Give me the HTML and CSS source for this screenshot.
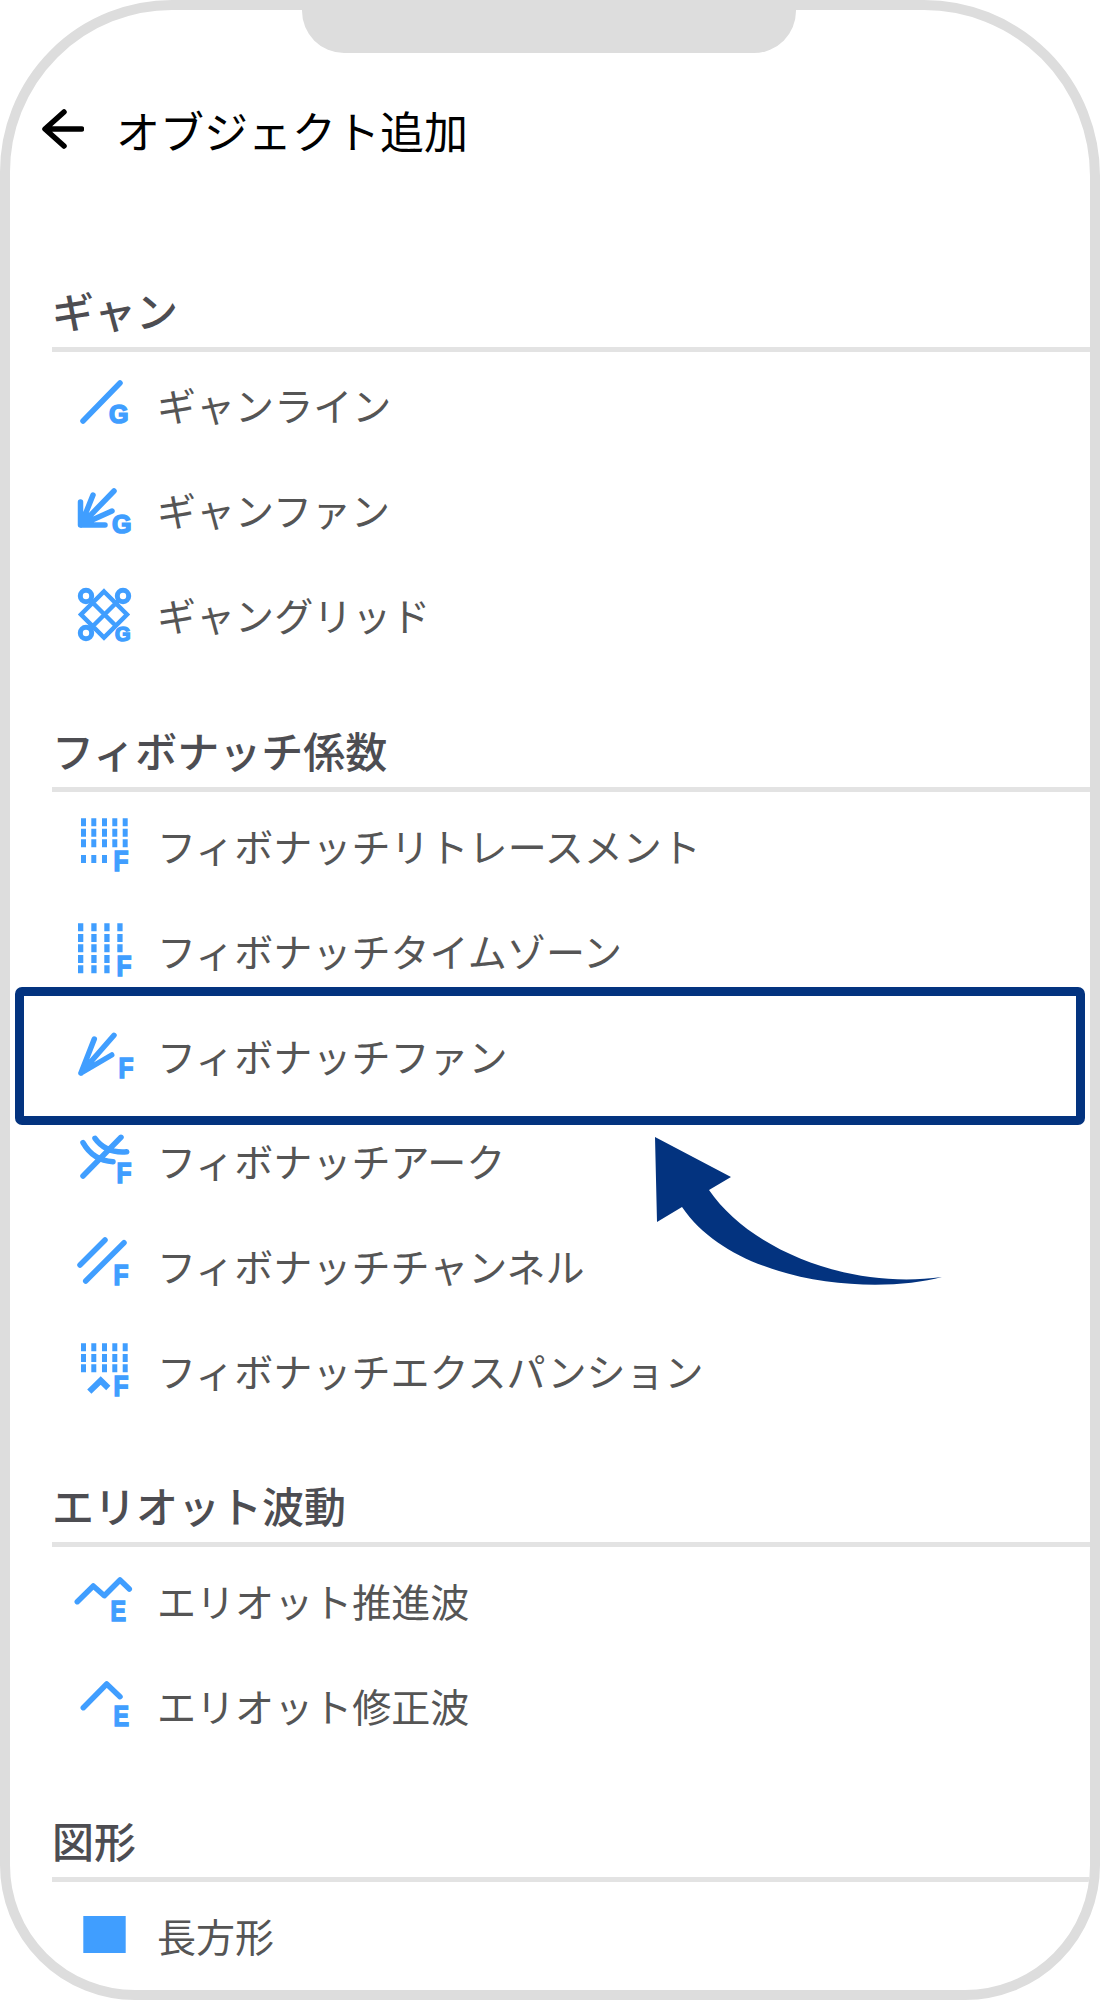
FILE: index.html
```html
<!DOCTYPE html>
<html lang="ja">
<head>
<meta charset="utf-8">
<title>オブジェクト追加</title>
<link rel="stylesheet" href="styles.css">
</head>
<body>
<div class="phone">
  <div class="notch"></div>
  <header class="header">
    <svg class="back" viewBox="0 0 42 40"><path d="M39.5 20H4M22 3L3 20L22 37"/></svg>
    <h1 class="title">オブジェクト追加</h1>
  </header>

  <section class="section first">
    <h2 class="heading">ギャン</h2>
    <ul class="rows">
      <li class="row">
        <svg class="icon" viewBox="0 -2 88 105"><path class="ln" d="M23 68L60 30"/><text class="tag" x="49" y="70" font-size="25">G</text></svg>
        <span>ギャンライン</span>
      </li>
      <li class="row">
        <svg class="icon" viewBox="0 -2 88 105"><path class="ln" d="M20.5 44V67H45M21 67L33 37M21 67L54 33M21 67L52 53"/><path class="fill" d="M21 52L36 67H21Z"/><text class="tag" x="52" y="75" font-size="25">G</text></svg>
        <span>ギャンファン</span>
      </li>
      <li class="row">
        <svg class="icon" viewBox="0 -2 88 105"><circle class="ring" cx="26" cy="33" r="5.700"/><circle class="ring" cx="63" cy="33" r="5.700"/><circle class="ring" cx="26" cy="70" r="5.700"/><path class="thin" d="M44 28.500L67 51.500L44 74.500L21 51.500ZM30 37L56 63M59 37L30 66"/><text class="tag" x="55" y="78" font-size="20">G</text></svg>
        <span>ギャングリッド</span>
      </li>
    </ul>
  </section>

  <section class="section second">
    <h2 class="heading">フィボナッチ係数</h2>
    <ul class="rows">
      <li class="row">
        <svg class="icon" viewBox="0 -2 88 105"><path class="fill" d="M21 24.300h5v8h-5zM31.300 24.300h5v8h-5zM42 24.300h5v8h-5zM52.300 24.300h5v8h-5zM62.700 24.300h5v8h-5zM21 34.700h5v8h-5zM31.300 34.700h5v8h-5zM42 34.700h5v8h-5zM52.300 34.700h5v8h-5zM62.700 34.700h5v8h-5zM21 45.300h5v8h-5zM31.300 45.300h5v8h-5zM42 45.300h5v8h-5zM52.300 45.300h5v8h-5zM62.700 45.300h5v8h-5zM21 61h5v8h-5zM31.300 61h5v8h-5zM42 61h5v8h-5z"/><text class="tag" x="53.500" y="77" font-size="29" textLength="15" lengthAdjust="spacingAndGlyphs">F</text></svg>
        <span>フィボナッチリトレースメント</span>
      </li>
      <li class="row">
        <svg class="icon" viewBox="0 -2 88 105"><path class="fill" d="M18 24.300h5.300v8h-5.300zM31.300 24.300h5.300v8h-5.300zM44.300 24.300h5.300v8h-5.300zM57.300 24.300h5.300v8h-5.300zM18 35h5.300v8h-5.300zM31.300 35h5.300v8h-5.300zM44.300 35h5.300v8h-5.300zM57.300 35h5.300v8h-5.300zM18 45.300h5.300v8h-5.300zM31.300 45.300h5.300v8h-5.300zM44.300 45.300h5.300v8h-5.300zM57.300 45.300h5.300v8h-5.300zM18 56h5.300v8h-5.300zM31.300 56h5.300v8h-5.300zM44.300 56h5.300v8h-5.300zM18 66.300h5.300v8h-5.300zM31.300 66.300h5.300v8h-5.300zM44.300 66.300h5.300v8h-5.300z"/><text class="tag" x="56.500" y="77" font-size="29" textLength="15" lengthAdjust="spacingAndGlyphs">F</text></svg>
        <span>フィボナッチタイムゾーン</span>
      </li>
      <li class="row">
        <svg class="icon" viewBox="0 -2 88 105"><path class="ln" d="M21 69L34.300 35M21 69L54 31.300M21 69L51.700 51"/><path class="fill" d="M21 70L25 56L35 60Z"/><text class="tag" x="58.500" y="74" font-size="29" textLength="15" lengthAdjust="spacingAndGlyphs">F</text></svg>
        <span>フィボナッチファン</span>
      </li>
      <li class="row">
        <svg class="icon" viewBox="0 -2 88 105"><path class="ln" d="M23 67L61 28.300M23 33.700C30 46 40 52 53 52.700M35 29.300C42 39 52 44 66.700 42.700"/><text class="tag" x="56.500" y="74.300" font-size="29" textLength="15" lengthAdjust="spacingAndGlyphs">F</text></svg>
        <span>フィボナッチアーク</span>
      </li>
      <li class="row">
        <svg class="icon" viewBox="0 -2 88 105"><path class="ln" d="M20 51L45 26M25.700 67L64 28.700"/><text class="tag" x="53.500" y="71.300" font-size="29" textLength="15" lengthAdjust="spacingAndGlyphs">F</text></svg>
        <span>フィボナッチチャンネル</span>
      </li>
      <li class="row">
        <svg class="icon" viewBox="0 -2 88 105"><path class="fill" d="M21 24.300h5v8h-5zM31.300 24.300h5v8h-5zM42 24.300h5v8h-5zM52.300 24.300h5v8h-5zM62.700 24.300h5v8h-5zM21 35h5v8h-5zM31.300 35h5v8h-5zM42 35h5v8h-5zM52.300 35h5v8h-5zM62.700 35h5v8h-5zM21 45.300h5v8h-5zM31.300 45.300h5v8h-5zM42 45.300h5v8h-5zM52.300 45.300h5v8h-5zM62.700 45.300h5v8h-5z"/><path class="chev" d="M29.300 72.700L40.700 61.500L48.300 69"/><text class="tag" x="53.500" y="76.700" font-size="29" textLength="15" lengthAdjust="spacingAndGlyphs">F</text></svg>
        <span>フィボナッチエクスパンション</span>
      </li>
    </ul>
  </section>

  <section class="section third">
    <h2 class="heading">エリオット波動</h2>
    <ul class="rows">
      <li class="row">
        <svg class="icon" viewBox="0 -2 88 105"><path class="ln" d="M17.300 52.700L33.300 37L44.300 46.700L60 31L69.300 40"/><text class="tag" x="50.500" y="71.700" font-size="29" textLength="15.500" lengthAdjust="spacingAndGlyphs">E</text></svg>
        <span>エリオット推進波</span>
      </li>
      <li class="row">
        <svg class="icon" viewBox="0 -2 88 105"><path class="ln" d="M23.300 53.700L46.700 30L60 42.700"/><text class="tag" x="53.500" y="71.700" font-size="29" textLength="15.500" lengthAdjust="spacingAndGlyphs">E</text></svg>
        <span>エリオット修正波</span>
      </li>
    </ul>
  </section>

  <section class="section fourth">
    <h2 class="heading">図形</h2>
    <ul class="rows">
      <li class="row">
        <svg class="icon" viewBox="0 0 88 105"><path class="fill" d="M23.300 34H65.700V71H23.300Z"/></svg>
        <span>長方形</span>
      </li>
    </ul>
  </section>

  <div class="highlight"></div>
  <svg class="arrow" viewBox="0 0 300 170"><path d="M5 7L81 47L59 60C100 120 200 160 292 147C225 165 85 155 32 77L7 92Z"/></svg>
</div>
</body>
</html>
```
FILE: styles.css
```css
* { box-sizing: border-box; }
html, body { margin: 0; padding: 0; background: #fff; }
body { font-family: "Noto Sans CJK JP", "Noto Sans", sans-serif; }

.phone {
  position: relative;
  width: 1100px;
  height: 2000px;
  border: 10px solid #dddddd;
  border-radius: 172px 176px 135px 135px;
  background: #fff;
  overflow: hidden;
}
.notch {
  position: absolute;
  left: 292px;
  top: -10px;
  width: 494px;
  height: 53px;
  background: #dddddd;
  border-radius: 0 0 42px 42px;
}
.header {
  display: flex;
  align-items: center;
  gap: 32px;
  height: 100px;
  margin-top: 70px;
  padding-left: 32px;
}
.back { width: 42px; height: 40px; margin-top: -2px; }
.back path { fill: none; stroke: #000; stroke-width: 5.5; stroke-linecap: round; stroke-linejoin: round; }
.title { margin: 0; font-size: 44px; font-weight: 400; color: #000; line-height: 60px; }

.section { margin-top: 58px; }
.section.first { margin-top: 105px; }
.first .rows { margin-top: -1px; padding-bottom: 1px; }
.heading {
  margin: 0 0 0 42px;
  height: 67px;
  border-bottom: 5px solid #e3e3e3;
  font-size: 42px;
  font-weight: 500;
  line-height: 50px;
  color: #4d4d52;
}
.rows { list-style: none; margin: 0; padding: 0; }
.row {
  display: flex;
  align-items: center;
  height: 105px;
  padding-left: 50px;
  font-size: 39.050px;
  color: #555555;
}
.icon { width: 88px; height: 105px; margin-right: 9px; flex: none; }
.ln { fill: none; stroke: #409eff; stroke-width: 5.500; stroke-linecap: round; stroke-linejoin: round; }
.thin { fill: none; stroke: #409eff; stroke-width: 4.500; }
.ring { fill: none; stroke: #409eff; stroke-width: 5; }
.chev { fill: none; stroke: #409eff; stroke-width: 6; }
.fill { fill: #409eff; }
.tag {
  fill: #409eff;
  stroke: #409eff;
  stroke-width: 1.600;
  font-family: "Liberation Sans", Arial, sans-serif;
  font-weight: 700;
}

.highlight {
  position: absolute;
  left: 5px;
  top: 977px;
  width: 1070px;
  height: 138px;
  border: 9px solid #03337f;
  border-radius: 7px;
}
.arrow {
  position: absolute;
  left: 640px;
  top: 1120px;
  width: 300px;
  height: 170px;
}
.arrow path { fill: #03337f; }
```
